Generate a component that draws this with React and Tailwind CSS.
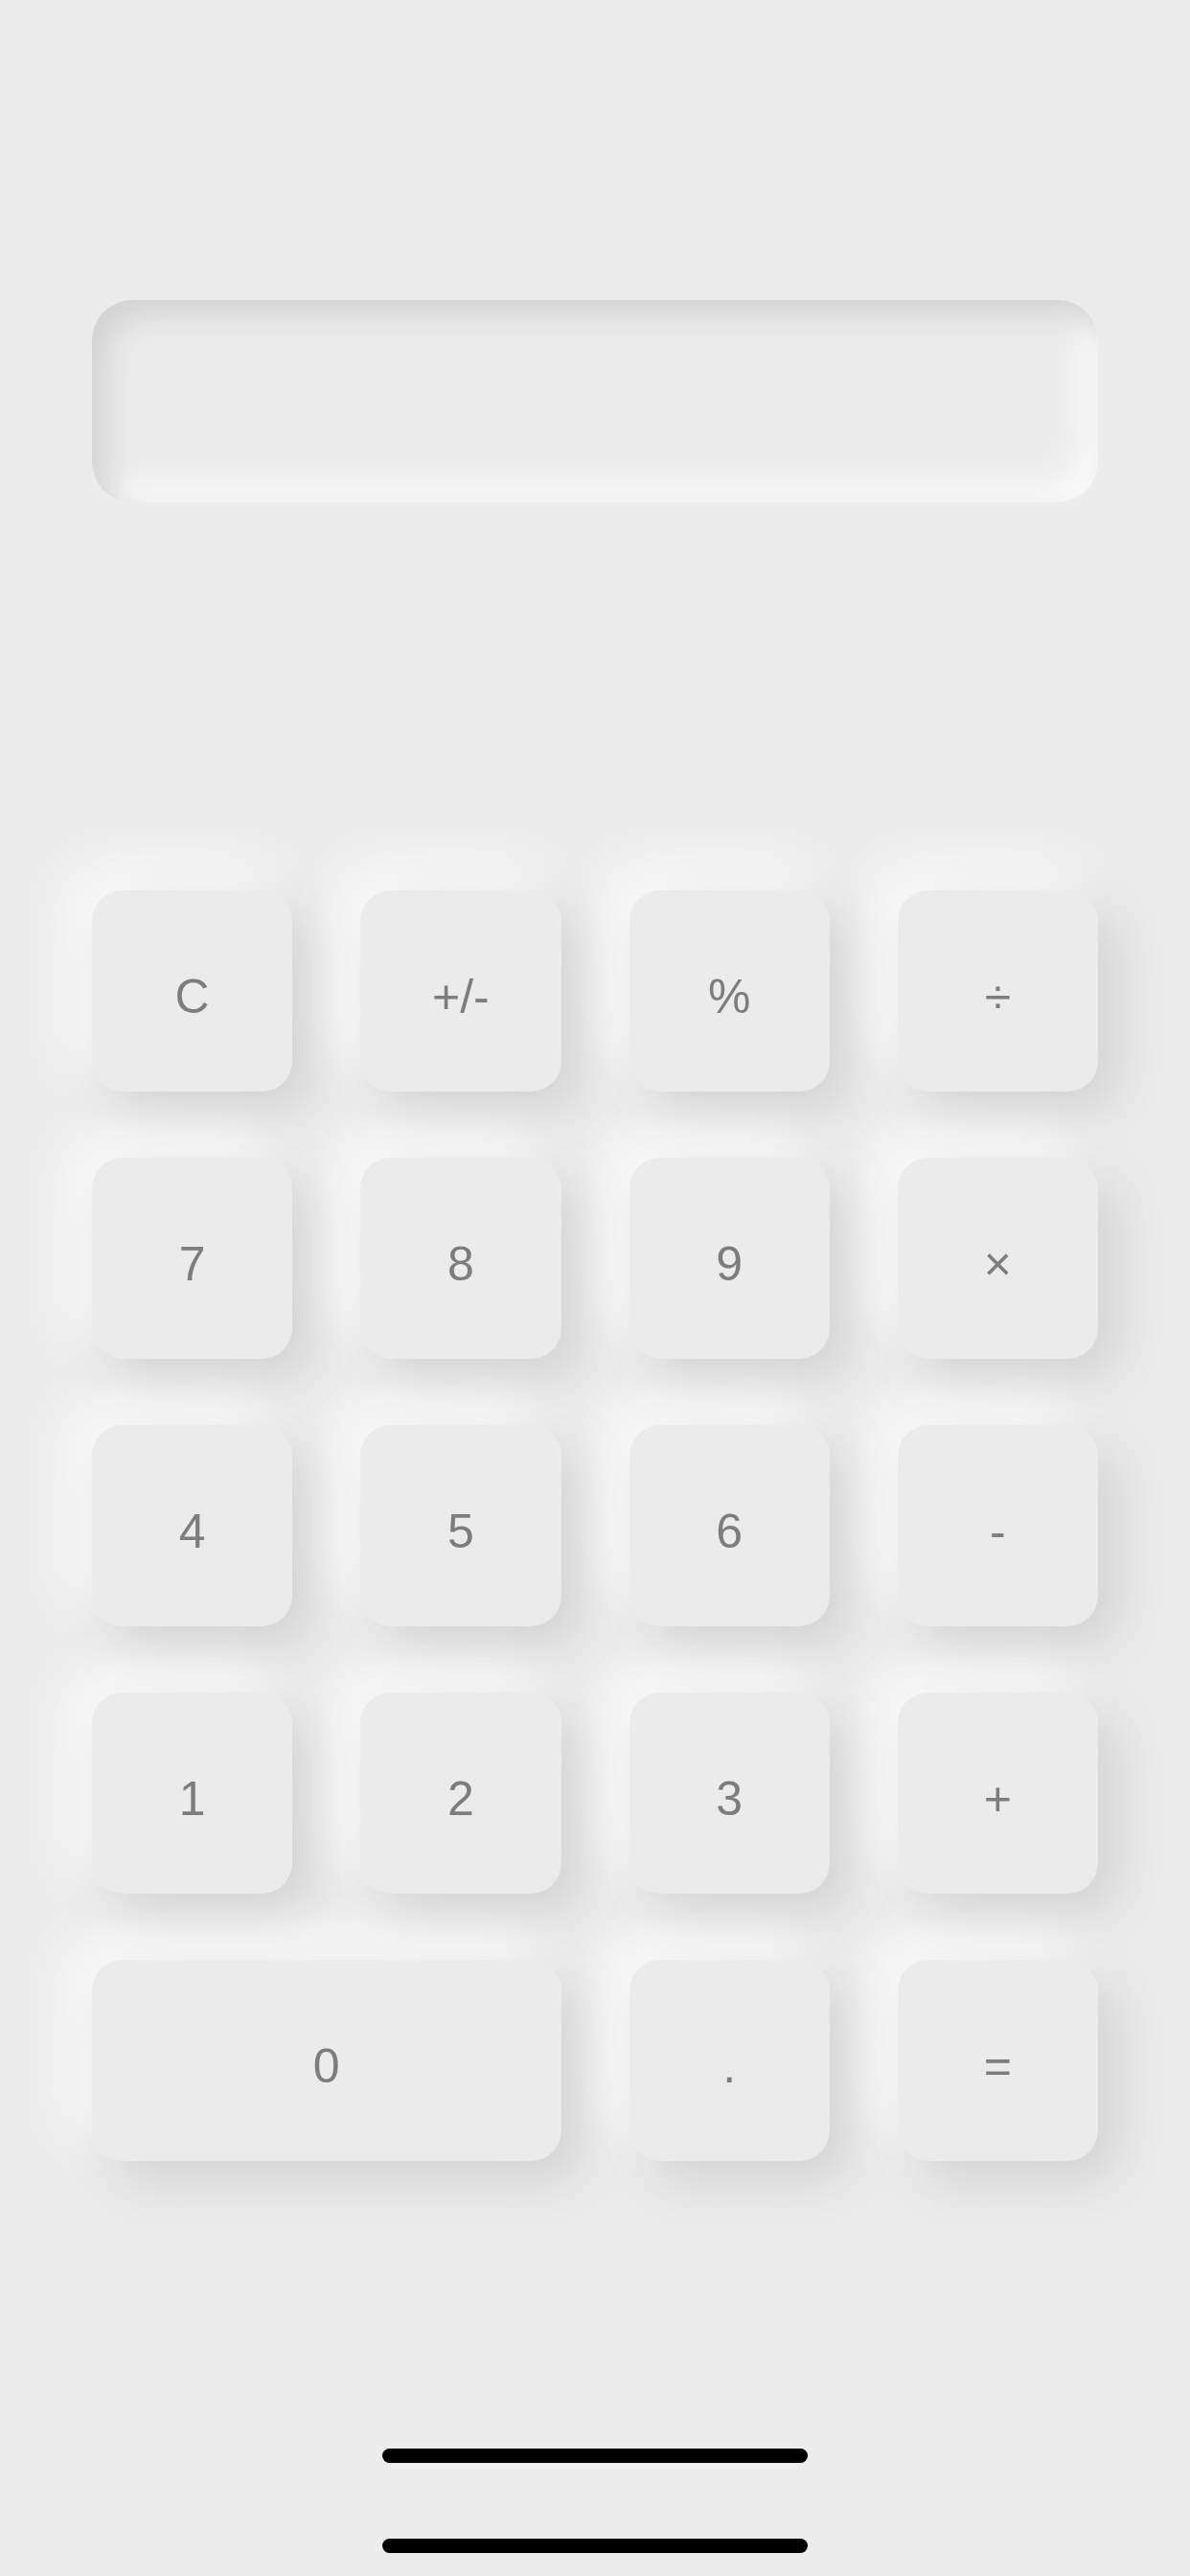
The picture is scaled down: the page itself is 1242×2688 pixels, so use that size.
import React from "react";

// --- Keys ---
const keys = [
  { label: "C" },
  { label: "+/-" },
  { label: "%" },
  { label: "÷" },
  { label: "7" },
  { label: "8" },
  { label: "9" },
  { label: "×" },
  { label: "4" },
  { label: "5" },
  { label: "6" },
  { label: "-" },
  { label: "1" },
  { label: "2" },
  { label: "3" },
  { label: "+" },
  { label: "0", wide: true },
  { label: "." },
  { label: "=" },
];

const Key = ({ label, wide }) => (
  <button
    className={`${
      wide ? "col-span-2" : ""
    } h-[210px] rounded-[32px] bg-[#ebebeb] shadow-[20px_20px_56px_#d0d0d0,-20px_-20px_56px_#ffffff] flex items-center justify-center text-[50px] text-[#7d7d7d] font-['Liberation_Sans',Arial,sans-serif] leading-normal`}
  >
    <span className="translate-y-[6px]">{label}</span>
  </button>
);

export default function App() {
  return (
    <div className="w-full min-h-[2688px] bg-[#ececec] flex flex-col px-[96px] pt-[313px]">
      {/* Display */}
      <div className="h-[211px] rounded-[42px] bg-[#ececec] shadow-[inset_16px_16px_32px_#d3d3d3,inset_-16px_-16px_32px_#fbfbfb]" />

      {/* Keypad */}
      <div className="mt-[405px] grid grid-cols-4 gap-x-[71px] gap-y-[69px]">
        {keys.map((k) => (
          <Key key={k.label} label={k.label} wide={k.wide} />
        ))}
      </div>

      {/* Home indicators */}
      <div className="mt-[300px] flex flex-col items-center gap-[79px]">
        <div className="w-[444px] h-[15px] rounded-full bg-black" />
        <div className="w-[444px] h-[15px] rounded-full bg-black" />
      </div>
    </div>
  );
}
